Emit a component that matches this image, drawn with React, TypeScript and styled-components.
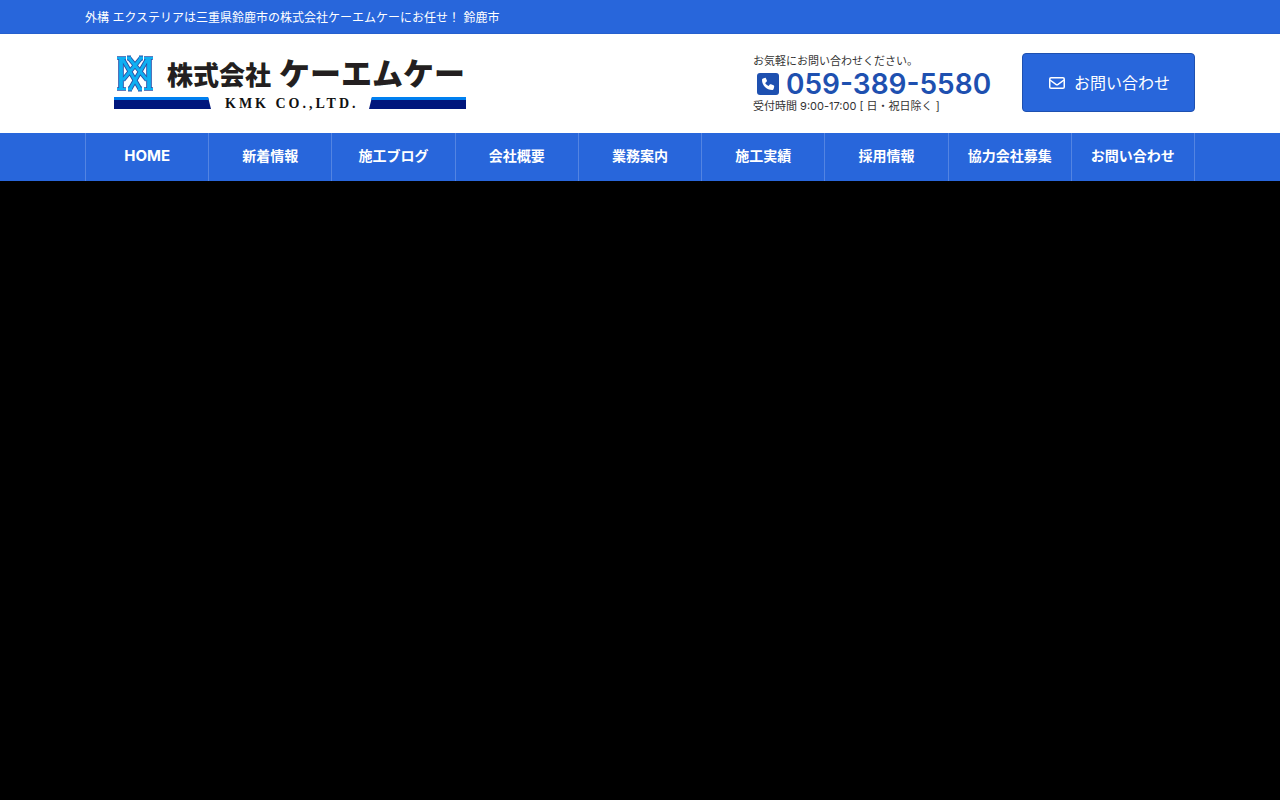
import React from "react";
import styled, { createGlobalStyle } from "styled-components";

const blue = "#2866db";
const darkBlue = "#1e50b0";

const GlobalStyle = createGlobalStyle`
  *, *::before, *::after { box-sizing: border-box; }
  body {
    margin: 0;
    background: #000;
    color: #333;
    font-family: Inter, "Noto Sans CJK JP", sans-serif;
  }
  a { color: inherit; text-decoration: none; }
  p { margin: 0; }
`;

const Container = styled.div`
  max-width: 1140px;
  margin: 0 auto;
  padding: 0 15px;
`;

const TopBar = styled.div`
  padding-top: 2px;
  background: ${blue};
  border-bottom: 1px solid #2560ce;
  color: #fff;
  font-size: 12px;
  line-height: 31px;
`;

const Header = styled.header`
  background: #fff;
`;

const HeaderRow = styled(Container)`
  display: flex;
  align-items: center;
  justify-content: space-between;
  padding-top: 19px;
  padding-bottom: 19px;
`;

const LogoLink = styled.a`
  display: block;
  margin-left: 29px;
  svg { display: block; overflow: visible; }
`;

const ContactArea = styled.div`
  display: flex;
  align-items: flex-start;
`;

const ContactInfo = styled.div`
  width: 269px;
  padding-top: 1px;
  font-size: 11px;
  line-height: 15px;
`;

const PhoneLink = styled.a`
  display: flex;
  align-items: center;
  gap: 7px;
  padding-left: 4px;
  height: 30px;
  color: ${darkBlue};
  font-size: 28px;
  font-weight: 600;
  line-height: 28px;
  white-space: nowrap;
`;

const ContactButton = styled.a`
  display: flex;
  align-items: center;
  justify-content: center;
  gap: 9px;
  width: 173px;
  height: 59px;
  padding-left: 2px;
  background: ${blue};
  border: 1px solid ${darkBlue};
  border-radius: 4px;
  color: #fff;
  font-size: 16px;
  line-height: 24px;
`;

const Nav = styled.nav`
  background: ${blue};
`;

const NavList = styled.ul`
  display: flex;
  margin: 0;
  padding: 0;
  list-style: none;
  border-right: 1px solid #5384e2;
`;

const NavItem = styled.li`
  flex: 1;
  border-left: 1px solid #5384e2;
`;

const NavLink = styled.a<{ $latin: boolean }>`
  display: block;
  padding: 12px 0 14px;
  color: #fff;
  font-size: ${({ $latin }) => ($latin ? 15 : 14)}px;
  font-weight: 700;
  line-height: 22px;
  text-align: center;
  white-space: nowrap;
`;

const stems = "M7 1V34M35 1V34";
const serifs = "M3 2H12M3 33H12M30 2H39M30 33H39";
const lattice =
  "M8 2L26 33M34 2L16 33M15 2L33 24M27 2L9 24M13 2H17M25 2H29M14 33H18M24 33H28";

const Monogram = ({ color, stem, line, serif }: { color: string; stem: number; line: number; serif: number }) => (
  <g fill="none" stroke={color}>
    <path d={lattice} strokeWidth={line} />
    <path d={stems} strokeWidth={stem} />
    <path d={serifs} strokeWidth={serif} />
  </g>
);

const Logo = () => (
  <svg width="352" height="55" viewBox="0 0 352 55" role="img" aria-label="株式会社 ケーエムケー">
    <Monogram color="#2a4fa6" stem={5.6} line={4.8} serif={3.4} />
    <Monogram color="#0fb0f2" stem={3.8} line={3} serif={1.8} />
    <g fill="#231f20" fontFamily="'Noto Sans CJK JP', sans-serif" fontWeight="900">
      <text x="53" y="29" fontSize="26">株式会社</text>
      <text x="165" y="29" fontSize="31">ケーエムケー</text>
    </g>
    <path d="M0 41H94L97 53H0Z" fill="#00167c" />
    <path d="M0 41H94L95 44H0Z" fill="#0080f0" />
    <path d="M258 41H352V53H255Z" fill="#00167c" />
    <path d="M258 41H352V44H257Z" fill="#0080f0" />
    <text x="111" y="52" fill="#111" fontFamily="'Liberation Serif', serif" fontWeight="700" fontSize="14" letterSpacing="3">
      KMK CO.,LTD.
    </text>
  </svg>
);

const PhoneIcon = () => (
  <svg width="22" height="22" viewBox="0 0 22 22" aria-hidden="true">
    <rect width="22" height="22" rx="3" fill="currentColor" />
    <path
      d="M8.3 4.8L6 5.4C5.4 5.6 5 6.1 5 6.7C5 12.4 9.6 17 15.3 17C15.9 17 16.4 16.6 16.6 16L17.2 13.7C17.3 13.1 17 12.5 16.5 12.3L14 11.3C13.5 11.1 12.9 11.2 12.6 11.7L11.6 12.9C9.8 12.1 8.4 10.6 8.2 9.9L9.5 8.8C9.9 8.5 10.1 7.9 9.9 7.4L8.9 5.3C8.8 4.9 8.6 4.7 8.3 4.8Z"
      fill="#fff"
    />
  </svg>
);

const MailIcon = () => (
  <svg width="16" height="12" viewBox="0 0 16 12" fill="none" stroke="currentColor" strokeWidth="1.5" aria-hidden="true">
    <rect x=".75" y=".75" width="14.5" height="10.5" rx="1.3" />
    <path d="M1 3L6.9 7.3Q8 8.1 9.1 7.3L15 3" />
  </svg>
);

const navItems = [
  { label: "HOME", latin: true },
  { label: "新着情報" },
  { label: "施工ブログ" },
  { label: "会社概要" },
  { label: "業務案内" },
  { label: "施工実績" },
  { label: "採用情報" },
  { label: "協力会社募集" },
  { label: "お問い合わせ" },
];

export default function App() {
  return (
    <>
      <GlobalStyle />
      <TopBar>
        <Container>外構 エクステリアは三重県鈴鹿市の株式会社ケーエムケーにお任せ！ 鈴鹿市</Container>
      </TopBar>
      <Header>
        <HeaderRow>
          <LogoLink href="#">
            <Logo />
          </LogoLink>
          <ContactArea>
            <ContactInfo>
              <p>お気軽にお問い合わせください。</p>
              <PhoneLink href="tel:059-389-5580">
                <PhoneIcon />
                059-389-5580
              </PhoneLink>
              <p>受付時間 9:00-17:00 [ 日・祝日除く ]</p>
            </ContactInfo>
            <ContactButton href="#">
              <MailIcon />
              お問い合わせ
            </ContactButton>
          </ContactArea>
        </HeaderRow>
      </Header>
      <Nav>
        <Container>
          <NavList>
            {navItems.map(({ label, latin = false }) => (
              <NavItem key={label}>
                <NavLink href="#" $latin={latin}>
                  {label}
                </NavLink>
              </NavItem>
            ))}
          </NavList>
        </Container>
      </Nav>
    </>
  );
}
